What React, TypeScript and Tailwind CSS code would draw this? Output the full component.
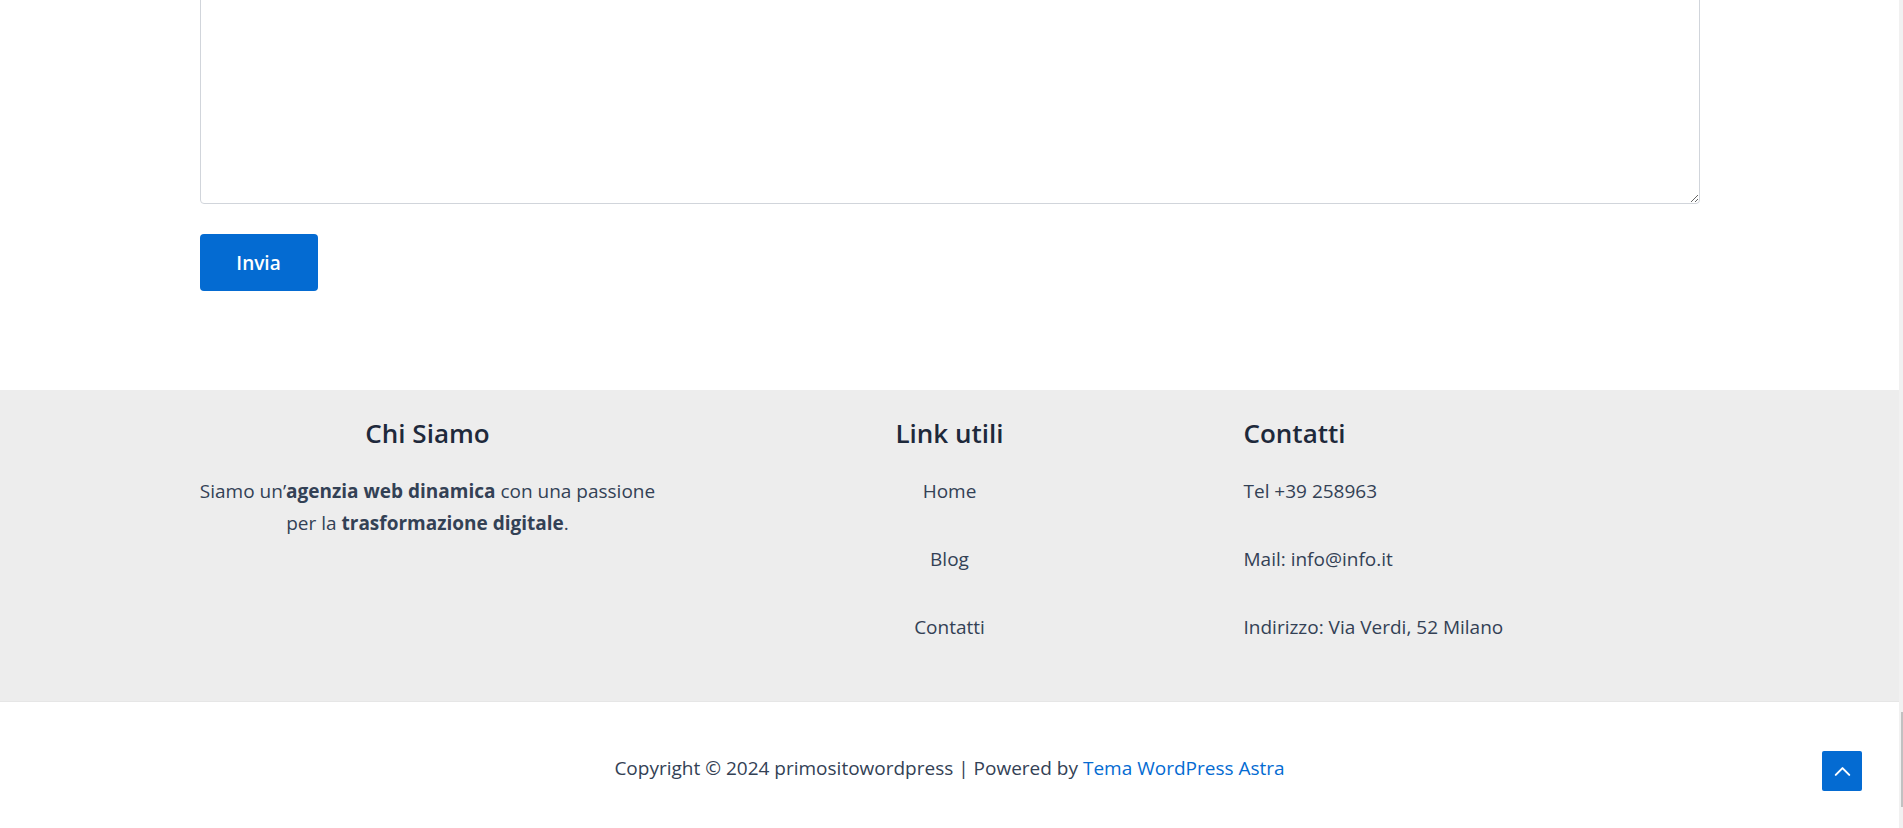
import { ChevronUp } from 'lucide-react';

const font = { fontFamily: '"Open Sans", "Noto Sans", Arial, sans-serif' };

// footer column helpers
function FooterHeading({ children }: { children: React.ReactNode }) {
  return (
    <h2 className="text-[26px] leading-[34px] font-semibold text-[#1e293b]">{children}</h2>
  );
}

export default function App() {
  return (
    <div className="flex h-[828px] w-full overflow-hidden bg-white" style={font}>
      <div className="flex min-w-0 flex-1 flex-col">
        {/* form tail */}
        <section className="h-[390px] w-full">
          <div className="mx-auto w-[1500px]">
            <div className="flex h-[204px] flex-col justify-end overflow-hidden">
              <textarea
                className="h-[320px] w-full shrink-0 rounded-[4px] border border-[#d1d5db] bg-white outline-none"
                aria-label="Messaggio"
              />
            </div>
            <button className="mt-[30px] h-[57px] w-[118px] rounded-[4px] bg-[#046bd2] pt-[2px] text-[19px] font-semibold text-white">
              Invia
            </button>
          </div>
        </section>

        {/* footer widgets */}
        <footer className="w-full border-b border-[#e6e6e6] bg-[#ededed] pt-[26px] pb-[58px]">
          <div className="mx-auto grid w-[1500px] grid-cols-3 gap-x-[66px] text-[19px] leading-[32px] text-[#334155]">
            <div className="text-center">
              <FooterHeading>Chi Siamo</FooterHeading>
              <p className="mt-[25px] whitespace-nowrap">
                Siamo un’<strong className="font-bold">agenzia web dinamica</strong> con una passione
                <br />
                per la <strong className="font-bold">trasformazione digitale</strong>.
              </p>
            </div>

            <div className="text-center">
              <FooterHeading>Link utili</FooterHeading>
              <ul className="mt-[25px] flex flex-col gap-[36px]">
                <li><a href="#">Home</a></li>
                <li><a href="#">Blog</a></li>
                <li><a href="#">Contatti</a></li>
              </ul>
            </div>

            <div>
              <FooterHeading>Contatti</FooterHeading>
              <div className="mt-[25px] flex flex-col gap-[36px]">
                <p>Tel +39 258963</p>
                <p>Mail: info@info.it</p>
                <p>Indirizzo: Via Verdi, 52 Milano</p>
              </div>
            </div>
          </div>
        </footer>

        {/* copyright bar */}
        <div className="flex-1 pt-[50px] text-center text-[19px] leading-[32px] text-[#334155]">
          Copyright © 2024 primositowordpress | Powered by{' '}
          <a href="#" className="text-[#046bd2]">Tema WordPress Astra</a>
        </div>
      </div>

      {/* fake scrollbar */}
      <div className="flex w-[4px] shrink-0 flex-col bg-[#f1f1f1]">
        <div className="h-[712px]" />
        <div className="ml-[2px] h-[95px] w-[2px] bg-[#c1c1c1]" />
      </div>

      <button
        className="fixed right-[41px] bottom-[37px] flex h-[40px] w-[40px] items-center justify-center rounded-[2px] bg-[#046bd2] text-white"
        aria-label="Torna su"
      >
        <ChevronUp className="h-[27px] w-[27px]" strokeWidth={1.8} />
      </button>
    </div>
  );
}
